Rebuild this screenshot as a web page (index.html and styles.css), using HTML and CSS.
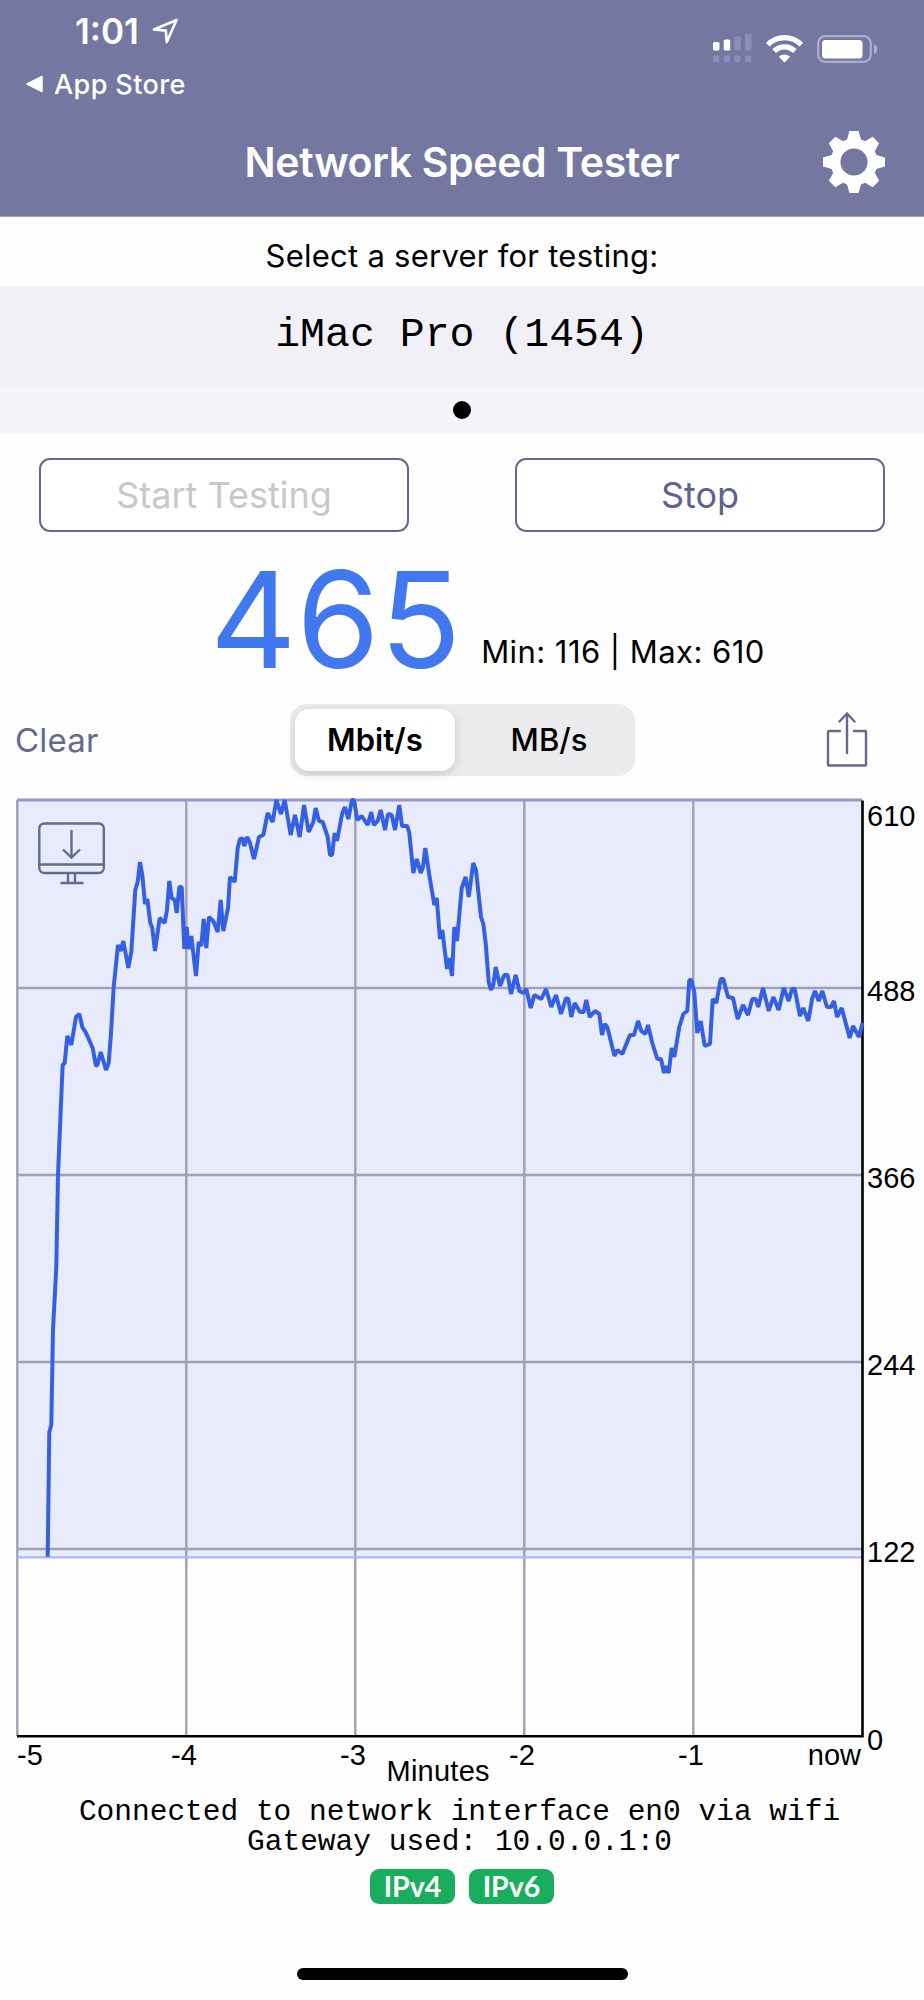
FILE: index.html
```html
<!DOCTYPE html>
<html lang="en">
<head>
    <meta charset="UTF-8">
    <title>Network Speed Tester</title>
    <link rel="stylesheet" href="styles.css">
</head>
<body>
    <header class="header">
        <div class="status-bar">
            <div class="status-left">
                <div class="clock">
                    <span class="time">1:01</span>
                    <svg class="location" width="27" height="27" viewBox="0 0 27 27"><path d="M2 11.5 L24.5 2 L14.8 24 L13.8 12.6 Z" fill="none" stroke="#fff" stroke-width="2.6" stroke-linejoin="round"/></svg>
                </div>
                <div class="back">
                    <svg width="18" height="18" viewBox="0 0 18 18"><path d="M1 9 L16 1.5 V16.5 Z" fill="#fff" stroke="#fff" stroke-width="1.5" stroke-linejoin="round"/></svg>
                    <span>App Store</span>
                </div>
            </div>
            <svg class="status-icons" width="166" height="32" viewBox="0 0 166 32">
                <g fill="#fff">
                    <rect x="1" y="10" width="6.5" height="8.5" rx="1.5"/>
                    <rect x="11.7" y="7.5" width="6.5" height="11" rx="1.5"/>
                </g>
                <g fill="#8b8fb9">
                    <rect x="22.3" y="4.5" width="6.5" height="14" rx="1.5"/>
                    <rect x="33" y="1.5" width="6.5" height="17" rx="1.5"/>
                    <rect x="1" y="23.5" width="6.5" height="6.5" rx="1.8"/>
                    <rect x="11.7" y="23.5" width="6.5" height="6.5" rx="1.8"/>
                    <rect x="22.3" y="23.5" width="6.5" height="6.5" rx="1.8"/>
                    <rect x="33" y="23.5" width="6.5" height="6.5" rx="1.8"/>
                </g>
                <g fill="none" stroke="#fff" stroke-width="5.2">
                    <path d="M55.8 12.8 A23 23 0 0 1 89.2 12.8"/>
                    <path d="M62.2 19.2 A14.5 14.5 0 0 1 82.8 19.2"/>
                </g>
                <path d="M72.5 30.5 L66.8 24.8 A8 8 0 0 1 78.2 24.8 Z" fill="#fff"/>
                <rect x="106.2" y="4.2" width="52.6" height="25.6" rx="7" fill="none" stroke="#abaed2" stroke-width="2.2"/>
                <rect x="110" y="8" width="40.5" height="18.5" rx="3.5" fill="#fff"/>
                <path d="M162 12.5 Q165.5 14 165.5 17 Q165.5 20.5 162 22 Z" fill="#abaed2"/>
            </svg>
        </div>
        <div class="nav-bar">
            <h1>Network Speed Tester</h1>
            <svg class="gear" width="64" height="64" viewBox="-32 -32 64 64">
                <g fill="#fff">
                    <g id="teeth">
                        <path id="tooth" d="M-8.5 -19 L-6.5 -24 L-4.6 -31 H4.6 L6.5 -24 L8.5 -19 Z"/>
                        <use href="#tooth" transform="rotate(45)"/>
                        <use href="#tooth" transform="rotate(90)"/>
                        <use href="#tooth" transform="rotate(135)"/>
                    </g>
                    <use href="#teeth" transform="rotate(180)"/>
                </g>
                <circle r="18.5" fill="none" stroke="#fff" stroke-width="9.8"/>
            </svg>
        </div>
    </header>

    <div class="select-label"><span>Select a server for testing:</span></div>
    <div class="server">iMac Pro (1454)</div>
    <div class="pager"><span class="dot"></span></div>

    <div class="buttons">
        <button class="btn" disabled>Start Testing</button>
        <button class="btn">Stop</button>
    </div>

    <div class="result">
        <span class="speed">465</span>
        <span class="range">Min: 116 | Max: 610</span>
    </div>

    <div class="toolbar">
        <span class="clear">Clear</span>
        <div class="segment">
            <span class="option active">Mbit/s</span>
            <span class="option">MB/s</span>
        </div>
        <svg class="share" width="44" height="60" viewBox="0 0 44 60" fill="none" stroke="#65688f" stroke-width="2.4" stroke-linecap="round" stroke-linejoin="round">
            <path d="M15 21 H4 Q3 21 3 22 V54.5 Q3 55.5 4 55.5 H40 Q41 55.5 41 54.5 V22 Q41 21 40 21 H29"/>
            <path d="M22 43 V3.5 M14.5 11.5 L22 3.5 L29.5 11.5"/>
        </svg>
    </div>

    <!-- speed history, 5 minutes wide -->
    <svg class="chart" width="924" height="1010" viewBox="0 0 924 1010">
        <rect x="17" y="20" width="845" height="757" fill="#e8ebfc"/>
        <g stroke="#9fa1b4" stroke-width="2.4">
            <path d="M17.3 20 V956 M186.3 20 V956 M355.3 20 V956 M524.3 20 V956 M693.3 20 V956"/>
            <path d="M17 208 H862 M17 395 H862 M17 582 H862 M17 769 H862"/>
        </g>
        <path d="M17 777.3 H862" stroke="#abb6ee" stroke-width="2.2"/>
        <path d="M17 20 H862" stroke="#9499c8" stroke-width="3"/>
        <path d="M17 956.3 H862.5 V20.5" fill="none" stroke="#000" stroke-width="2.6"/>

        <g fill="none" stroke="#65688f" stroke-width="2.4">
            <rect x="39.3" y="43.5" width="64.5" height="49.5" rx="5"/>
            <path d="M39.3 84.5 H103.8 M68 93 V102 M75 93 V102 M60.5 103 H83.5"/>
            <path d="M71.5 50 V77 M63 69.5 L71.5 77.5 L80 69.5"/>
        </g>

        <polyline class="line" points="47.7,776.7 49.3,652 51.3,645 53,550 56.3,487 58,395 62,300
            62.7,285 64.7,283 67.3,256 71.3,265 76,237 79.3,234 82.3,247 86,253 92.7,268 95.7,285 97.3,285.5
            100.7,272 106,290 108.7,283 111,253 113.7,207 118,165 120.7,171 123.3,161 128.3,188 131.3,172
            135.3,110 137.7,102 140,82 142.3,95 145,124 147.3,119 150.3,143 152.3,148 155,171 159.7,138
            164.7,143 167,130 169.3,101 171.7,118 174.7,120 176.7,133 179.3,107 181.7,107 184.3,169
            186.7,147 188.7,169 191.3,156 196,196 198.7,162 201.3,166 203.7,139 206.3,168 209,137 213.3,141
            217.7,152 220.7,120 223.3,151 228,128 230,97 234.7,102 237.7,68 240,59 242.7,58.5 244.3,66
            247.3,57 250,63 254,79 259,57 263.3,55 267.7,33 272.7,42 276.3,20 281,34 284.7,20 290.7,55
            295,35 299.7,57 304,25 308.7,52 313.3,42 315.7,28 319,41 322.7,42 327.7,57 330,75 332,75
            334.7,53 337,61 342.3,33 345,27 348.3,39 352,20 354,20 357.3,40 361.7,36 367.7,45 371.3,32
            373.7,45 377.7,41 380.7,30 385,50 388,34 391.7,35 395,50 399.3,25 402,46 407.3,46 409.3,53
            413.3,93 416.7,79 420.7,93 423,87 425.3,68 429.3,95 434.3,125 436.7,118 440,159 442.3,150
            447,189 449,178 452,196 454.3,147 457,161 461.7,108 465.7,97 468.7,117 473.3,83 476,90 481,137
            483.3,144 485.7,163 488.7,202 491,210 493.3,205 495.7,187 500,206 504.3,195 507.7,195 511,214
            515.7,195 519.3,211 523.3,213 526.3,209 530.7,228 534.3,215 541.3,219 546,209 551.3,227
            556,215 561,234 566,218 568.3,219 571.3,237 574.7,223 580,232 583.7,232 586.3,220 589.7,237
            595,231 599.3,234 602,255 604.7,244 607.3,247 614.5,276 617.3,270 622.3,274 630,255 634,255
            638,241 641.3,251 645.3,254 648,245 652.3,263 657.3,279 661,279 664,293 666,286 668.7,293
            671.7,268 674.3,277 679.3,247 683.3,234 687.3,231 689.3,200 691.3,200 694.3,212 697.3,253
            700.7,241 704.7,266 710,264 712.7,219 716.3,223 720.7,199 723.3,199 728,217 733,218 737.7,239
            743,225 748,235 752.3,219 755.7,219 758.3,227 763,208 768.7,231 773.3,217 778.7,230 783.7,208
            788.7,221 792,209 794.7,209 800,236 803.3,228 808.3,241 812.3,218 815,211 818.7,221 822.3,211
            827,227 831,227 834,221 837,237 841.7,228 849.7,258 853,246 859,257 862.5,243"/>

        <g class="axis">
            <text x="867" y="46">610</text>
            <text x="867" y="220.5">488</text>
            <text x="867" y="408">366</text>
            <text x="867" y="595">244</text>
            <text x="867" y="782">122</text>
            <text x="867" y="970">0</text>
            <text x="17" y="984.5">-5</text>
            <text x="171" y="984.5">-4</text>
            <text x="340" y="984.5">-3</text>
            <text x="509" y="984.5">-2</text>
            <text x="678" y="984.5">-1</text>
            <text x="861" y="984.5" text-anchor="end">now</text>
            <text x="438" y="1001" text-anchor="middle" textLength="103">Minutes</text>
        </g>
    </svg>

    <footer class="footer">
        <p>Connected to network interface en0 via wifi</p>
        <p>Gateway used: 10.0.0.1:0</p>
        <div class="badges">
            <span class="badge">IPv4</span>
            <span class="badge">IPv6</span>
        </div>
        <div class="home-bar"></div>
    </footer>
</body>
</html>
```
FILE: styles.css
```css
* {
    box-sizing: border-box;
}

body {
    margin: 0;
    width: 924px;
    height: 2000px;
    background: #fefefe;
    color: #000;
    font-family: Inter, "Liberation Sans", sans-serif;
    overflow: hidden;
    white-space: nowrap;
}

svg {
    display: block;
}

.header {
    height: 217px;
    background: #7478a0;
    border-bottom: 1px solid #a09fb4;
    color: #fff;
}

.status-bar {
    height: 110px;
    display: flex;
    justify-content: space-between;
    padding: 0 46px 0 26px;
}

.clock {
    display: flex;
    gap: 13px;
    padding: 10px 0 0 49px;
    height: 66px;
}

.time {
    font-size: 35px;
    line-height: 42px;
    font-weight: 600;
}

.location {
    margin-top: 8px;
}

.back {
    display: flex;
    align-items: center;
    gap: 10px;
    height: 36px;
    font-size: 27px;
    font-weight: 500;
    letter-spacing: 0.4px;
}

.status-icons {
    margin-top: 32px;
}

.nav-bar {
    height: 106px;
    display: grid;
    grid-template-columns: 102px 1fr 102px;
    align-items: center;
}

.nav-bar h1 {
    grid-column: 2;
    margin: 0;
    padding-bottom: 2px;
    font-size: 41px;
    line-height: 50px;
    font-weight: 600;
    letter-spacing: -0.35px;
    text-align: center;
}

.gear {
    margin-bottom: 2px;
}

.select-label {
    height: 69px;
    padding-top: 19px;
    font-size: 31px;
    line-height: 40px;
    letter-spacing: 0.25px;
    text-align: center;
}

.server {
    height: 101px;
    background: #f1f0f6;
    font-family: "Liberation Mono", monospace;
    font-size: 41.5px;
    line-height: 98px;
    text-align: center;
}

.pager {
    height: 46px;
    background: #f4f4f9;
    display: flex;
    justify-content: center;
    align-items: center;
}

.dot {
    width: 18px;
    height: 18px;
    border-radius: 50%;
    background: #000;
}

.buttons {
    display: flex;
    justify-content: space-between;
    padding: 25px 39px 0;
}

.btn {
    width: 370px;
    height: 74px;
    padding: 0;
    border: 2px solid #65688f;
    border-radius: 11px;
    background: #fff;
    color: #5f6290;
    font-family: inherit;
    font-size: 36px;
}

.btn:disabled {
    color: #c8c8c8;
}

.result {
    height: 170px;
    padding-left: 210px;
    display: flex;
    align-items: flex-start;
    gap: 20px;
}

.speed {
    color: #4177ef;
    font-size: 134px;
    line-height: 175px;
}

.range {
    padding-top: 100px;
    font-size: 31px;
    line-height: 40px;
    letter-spacing: 0.45px;
}

.toolbar {
    height: 78px;
    display: flex;
    align-items: center;
    justify-content: space-between;
    padding: 0 55px 2px 15px;
}

.clear {
    width: 275px;
    color: #65688f;
    font-size: 33px;
    letter-spacing: 0.2px;
}

.segment {
    width: 345px;
    height: 72px;
    padding: 5px;
    border-radius: 17px;
    background: #ebebed;
    display: flex;
    margin-right: auto;
}

.option {
    flex: 1;
    padding-left: 13px;
    font-size: 31px;
    line-height: 62px;
    font-weight: 500;
    text-align: center;
}

.option.active {
    flex: 0 0 160px;
    padding-left: 0;
    border-radius: 14px;
    background: #fff;
    box-shadow: 0 3px 10px rgba(0, 0, 0, 0.15);
    font-weight: 600;
}

.line {
    fill: none;
    stroke: #3560e4;
    stroke-width: 4;
    stroke-linejoin: bevel;
}

.axis text {
    font-family: "Liberation Sans", Arial, sans-serif;
    font-size: 29px;
}

.footer {
    font-family: "Liberation Mono", monospace;
    font-size: 29.5px;
    line-height: 30px;
    text-align: center;
    padding-top: 7px;
}

.footer p {
    margin: 0;
    padding-right: 5px;
}

.badges {
    display: flex;
    justify-content: center;
    gap: 14px;
    margin-top: 12px;
}

.badge {
    width: 85px;
    height: 35px;
    border-radius: 9px;
    background: #18ae5d;
    color: #fff;
    font-family: Lato, sans-serif;
    font-size: 28.5px;
    line-height: 35px;
    font-weight: 700;
}

.home-bar {
    width: 331px;
    height: 12px;
    margin: 64px auto 0;
    border-radius: 6px;
    background: #000;
}
```
